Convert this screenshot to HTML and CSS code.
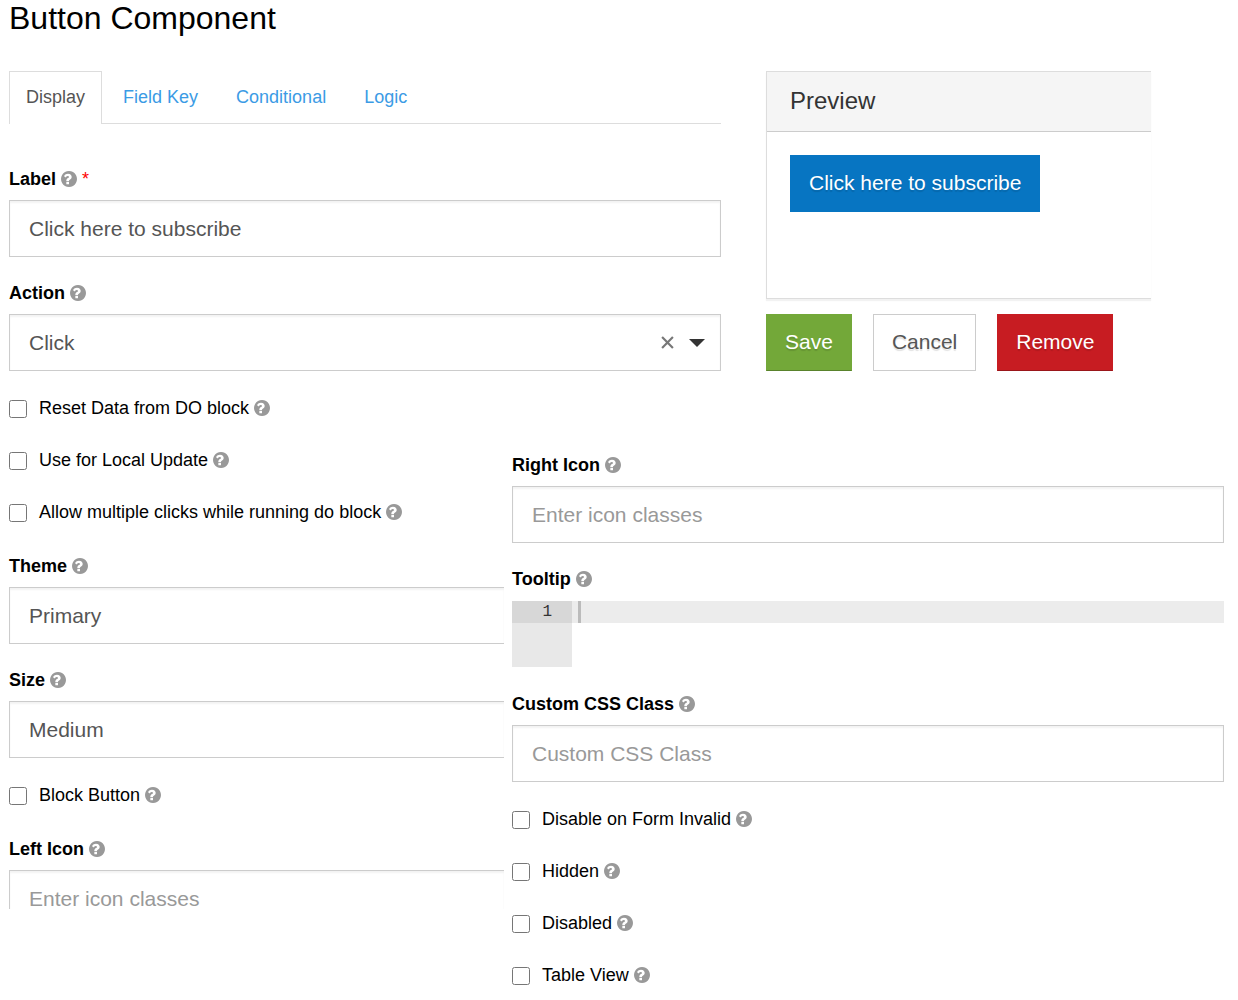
FILE: index.html
```html
<!DOCTYPE html>
<html lang="en">
<head>
<meta charset="utf-8">
<meta name="viewport" content="width=device-width, initial-scale=1">
<title>Button Component</title>
<link rel="stylesheet" href="styles.css">
</head>
<body>
<svg class="sprite" aria-hidden="true">
  <symbol id="help" viewBox="128 128 1536 1536">
    <path d="M896 1376v-192q0-14-9-23t-23-9h-192q-14 0-23 9t-9 23v192q0 14 9 23t23 9h192q14 0 23-9t9-23zm256-672q0-88-55.500-163t-138.500-116-170-41q-243 0-371 213-15 24 8 42l132 100q7 6 19 6 16 0 25-12 53-68 86-92 34-24 86-24 48 0 85.500 26t37.500 59q0 38-20 61t-68 45q-63 28-115.500 86.500t-52.500 125.500v36q0 14 9 23t23 9h192q14 0 23-9t9-23q0-19 21.500-49.500t54.500-49.500q32-18 49-28.500t46-35 44.500-48 28-60.500 12.500-81zm512 192q0 209-103 385.500t-279.500 279.500-385.500 103-385.500-103-279.500-279.500-103-385.500 103-385.500 279.500-279.500 385.500-103 385.500 103 279.500 279.500 103 385.500z" transform="translate(0 0)"/>
  </symbol>
</svg>

<main class="page">
  <h1 class="title">Button Component</h1>

  <div class="top">
    <section>
      <nav class="tabs">
        <a class="tab tab-active" href="#display">Display</a>
        <a class="tab" href="#key">Field Key</a>
        <a class="tab" href="#conditional">Conditional</a>
        <a class="tab" href="#logic">Logic</a>
      </nav>
      <div class="field">
        <label class="label" for="label">Label <svg class="help"><use href="#help"/></svg> <span class="required">*</span></label>
        <input class="control" id="label" type="text" value="Click here to subscribe">
      </div>
      <div class="field field-last">
        <label class="label" for="action">Action <svg class="help"><use href="#help"/></svg></label>
        <div class="picker">
          <select class="control" id="action"><option>Click</option></select>
          <div class="picker-tools">
            <button class="clear" type="button" aria-label="Clear"><svg class="clear-icon" viewBox="0 0 12 12"><path d="M1 1L11 11M11 1L1 11"/></svg></button>
            <span class="caret"></span>
          </div>
        </div>
      </div>
    </section>

    <aside>
      <div class="panel">
        <h2 class="panel-title">Preview</h2>
        <div class="panel-body">
          <button class="btn btn-primary" type="button">Click here to subscribe</button>
        </div>
      </div>
      <div class="actions">
        <button class="btn btn-success" type="button">Save</button>
        <button class="btn btn-default" type="button">Cancel</button>
        <button class="btn btn-danger" type="button">Remove</button>
      </div>
    </aside>
  </div>

  <div class="bottom">
    <section>
      <div class="checks">
        <label class="check"><input class="box" type="checkbox"><span>Reset Data from DO block <svg class="help"><use href="#help"/></svg></span></label>
        <label class="check"><input class="box" type="checkbox"><span>Use for Local Update <svg class="help"><use href="#help"/></svg></span></label>
        <label class="check"><input class="box" type="checkbox"><span>Allow multiple clicks while running do block <svg class="help"><use href="#help"/></svg></span></label>
      </div>
      <div class="field">
        <label class="label" for="theme">Theme <svg class="help"><use href="#help"/></svg></label>
        <select class="control control-open" id="theme"><option>Primary</option></select>
      </div>
      <div class="field">
        <label class="label" for="size">Size <svg class="help"><use href="#help"/></svg></label>
        <select class="control control-open" id="size"><option>Medium</option></select>
      </div>
      <div class="checks">
        <label class="check"><input class="box" type="checkbox"><span>Block Button <svg class="help"><use href="#help"/></svg></span></label>
      </div>
      <div class="field">
        <label class="label" for="left-icon">Left Icon <svg class="help"><use href="#help"/></svg></label>
        <div class="cut">
          <input class="control control-open" id="left-icon" type="text" placeholder="Enter icon classes">
        </div>
      </div>
    </section>

    <section class="second">
      <div class="field">
        <label class="label" for="right-icon">Right Icon <svg class="help"><use href="#help"/></svg></label>
        <input class="control" id="right-icon" type="text" placeholder="Enter icon classes">
      </div>
      <div class="field">
        <label class="label" for="tooltip">Tooltip <svg class="help"><use href="#help"/></svg></label>
        <div class="editor">
          <div class="gutter"><div class="line-number">1</div></div>
          <textarea class="code" id="tooltip" rows="3"></textarea>
          <span class="cursor"></span>
        </div>
      </div>
      <div class="field">
        <label class="label" for="css-class">Custom CSS Class <svg class="help"><use href="#help"/></svg></label>
        <input class="control" id="css-class" type="text" placeholder="Custom CSS Class">
      </div>
      <div class="checks">
        <label class="check"><input class="box" type="checkbox"><span>Disable on Form Invalid <svg class="help"><use href="#help"/></svg></span></label>
        <label class="check"><input class="box" type="checkbox"><span>Hidden <svg class="help"><use href="#help"/></svg></span></label>
        <label class="check"><input class="box" type="checkbox"><span>Disabled <svg class="help"><use href="#help"/></svg></span></label>
        <label class="check"><input class="box" type="checkbox"><span>Table View <svg class="help"><use href="#help"/></svg></span></label>
      </div>
    </section>
  </div>
</main>
</body>
</html>
```

FILE: styles.css
```css
* { box-sizing: border-box; }

body {
  margin: 0;
  background: #fff;
  color: #000;
  font: 18px/24px "Liberation Sans", Arial, sans-serif;
}

.sprite { display: none; }

.page { padding: 0 14px 0 9px; }

.title {
  margin: 0 0 35px;
  font-size: 32px;
  line-height: 36px;
  font-weight: 400;
}

.top {
  display: grid;
  grid-template-columns: 712fr 385fr 28fr;
  column-gap: 45px;
}

.bottom {
  display: grid;
  grid-template-columns: 495fr 712fr;
  column-gap: 8px;
}

.second { padding-top: 82px; }

/* Tabs */
.tabs {
  display: flex;
  gap: 4px;
  margin-bottom: 43px;
  border-bottom: 1px solid #ddd;
}

.tab {
  padding: 13px 16px 14px;
  border: 1px solid transparent;
  border-bottom: 0;
  color: #3b9be5;
  text-decoration: none;
}

.tab-active {
  margin-bottom: -1px;
  border-color: #ddd;
  background: #fff;
  color: #555;
}

/* Fields */
.field { margin-bottom: 24px; }

.field-last { margin-bottom: 0; }

.label {
  display: block;
  margin-bottom: 9px;
  font-weight: 700;
}

.help {
  width: 16px;
  height: 16px;
  fill: #999;
  vertical-align: -2px;
}

.required { color: #f00; font-weight: 400; }

.control {
  display: block;
  width: 100%;
  height: 57px;
  padding: 0 19px;
  border: 1px solid #ccc;
  border-radius: 0;
  background: #fff;
  box-shadow: inset 0 2px 2px rgba(0, 0, 0, .05);
  color: #555;
  font: inherit;
  font-size: 21px;
  appearance: none;
}

.control::placeholder { color: #999; opacity: 1; }

.control-open { border-right: 0; }

.cut { height: 39px; overflow: hidden; }

.picker { position: relative; }

.picker-tools {
  position: absolute;
  inset: 0 16px 0 auto;
  display: flex;
  align-items: center;
  gap: 15px;
}

.clear {
  display: flex;
  padding: 0;
  border: 0;
  background: none;
}

.clear-icon {
  width: 13px;
  height: 13px;
  fill: none;
  stroke: #777;
  stroke-width: 2;
}

.caret {
  border: solid transparent;
  border-width: 8px 8px 0;
  border-top-color: #333;
}

/* Check boxes */
.checks {
  display: grid;
  gap: 28px;
  margin: 25px 0 30px;
}

.check {
  display: flex;
  align-items: center;
  gap: 12px;
}

.box {
  width: 18px;
  height: 18px;
  margin: 2px 0 0;
}

/* Code editor */
.editor {
  position: relative;
  display: flex;
  margin: 10px 0 25px;
}

.gutter {
  width: 60px;
  background: #e8e8e8;
}

.line-number {
  padding-right: 20px;
  background: #d7d7d7;
  color: #333;
  font: 16px/22px "Liberation Mono", monospace;
  text-align: right;
}

.code {
  flex: 1;
  padding: 0 6px;
  border: 0;
  outline: 0;
  background: linear-gradient(#ececec 22px, transparent 22px);
  font: 16px/22px "Liberation Mono", monospace;
  resize: none;
}

.cursor {
  position: absolute;
  top: 0;
  left: 66px;
  width: 3px;
  height: 22px;
  background: #bbb;
}

/* Preview */
.panel {
  margin-bottom: 15px;
  border: 1px solid #ddd;
  border-right: 0;
  box-shadow: 0 2px 1px rgba(0, 0, 0, .05);
}

.panel-title {
  margin: 0;
  padding: 11px 23px 12px;
  border-bottom: 1px solid #ccc;
  background: #f5f5f5;
  color: #333;
  font-size: 24px;
  line-height: 36px;
  font-weight: 400;
}

.panel-body { padding: 23px 23px 86px; }

.actions { display: flex; gap: 21px; }

.btn {
  height: 57px;
  padding: 0 18px 2px;
  border: 1px solid;
  color: #fff;
  font: inherit;
  font-size: 21px;
  white-space: nowrap;
  text-shadow: 0 2px 1px rgba(0, 0, 0, .12);
}

.btn-primary { border-color: #0775c2; background: #0775c2; }
.btn-success { border-color: #73a839 #73a839 #59822c; background: #73a839; }
.btn-danger { border-color: #c71c22 #c71c22 #9a161a; background: #c71c22; }
.btn-default { border-color: #ccc; background: #fff; color: #555; }
```
